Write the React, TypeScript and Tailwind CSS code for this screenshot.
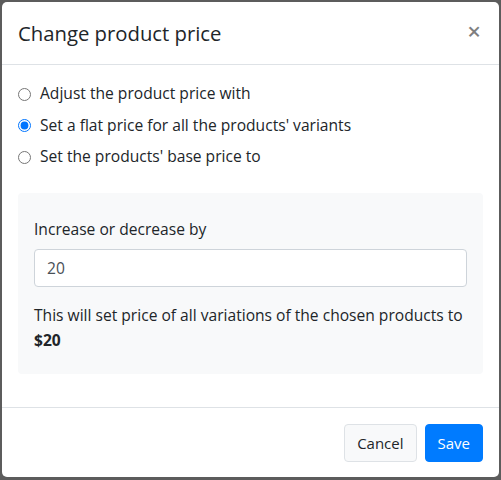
import { useState } from "react";

const options = [
  { id: "adjust", label: "Adjust the product price with" },
  { id: "flat", label: "Set a flat price for all the products' variants" },
  { id: "base", label: "Set the products' base price to" },
];

export default function App() {
  const [mode, setMode] = useState("flat");
  const [amount, setAmount] = useState("20");

  return (
    <div
      className="w-[501px] h-[480px] bg-[#5c5c5c] p-[2px] pb-[3px]"
      style={{ fontFamily: '"Open Sans", "Noto Sans", sans-serif' }}
    >
      <div className="h-full bg-white rounded-[5px] flex flex-col text-[#212529]">
        {/* Header */}
        <div className="flex items-center justify-between px-4 h-[63px] border-b border-[#dee2e6]">
          <h5 className="text-[20.3px] font-medium text-[#212529]">
            Change product price
          </h5>
          <button className="text-[24px] leading-none text-black/50 font-semibold mr-[2px] -mt-1">
            ×
          </button>
        </div>

        {/* Body */}
        <div className="flex-1 px-4 pt-[18px]">
          <div className="flex flex-col gap-[9.5px]">
            {options.map((o) => (
              <label key={o.id} className="flex items-center gap-2 text-[15.6px] h-[22px]">
                <input
                  type="radio"
                  name="mode"
                  checked={mode === o.id}
                  onChange={() => setMode(o.id)}
                  className="w-[13px] h-[13px] m-0 accent-[#0075ff]"
                />
                <span className="ml-[1px]">{o.label}</span>
              </label>
            ))}
          </div>

          <div className="mt-[25px] bg-[#f8f9fa] rounded-[4px] px-4 pt-[24px] pb-[21px]">
            <div className="text-[15.6px] leading-6 mb-[8px]">Increase or decrease by</div>
            <input
              value={amount}
              onChange={(e) => setAmount(e.target.value)}
              className="w-full h-[38px] px-3 bg-white border border-[#ced4da] rounded-[4px] text-[15.6px] text-[#495057] outline-none"
            />
            <p className="mt-[16px] text-[15.6px] leading-[25px]">
              This will set price of all variations of the chosen products to
              <br />
              <b className="font-bold">${amount}</b>
            </p>
          </div>
        </div>

        {/* Footer */}
        <div className="flex justify-end gap-[8px] px-4 pt-[16px] pb-[15px] border-t border-[#dee2e6]">
          <button className="h-[38px] px-3 rounded-[4px] bg-[#f8f9fa] border border-[#dee2e6] text-[15px] text-[#212529]">
            Cancel
          </button>
          <button className="h-[38px] px-3 rounded-[4px] bg-[#007bff] border border-[#007bff] text-[15px] text-white">
            Save
          </button>
        </div>
      </div>
    </div>
  );
}
